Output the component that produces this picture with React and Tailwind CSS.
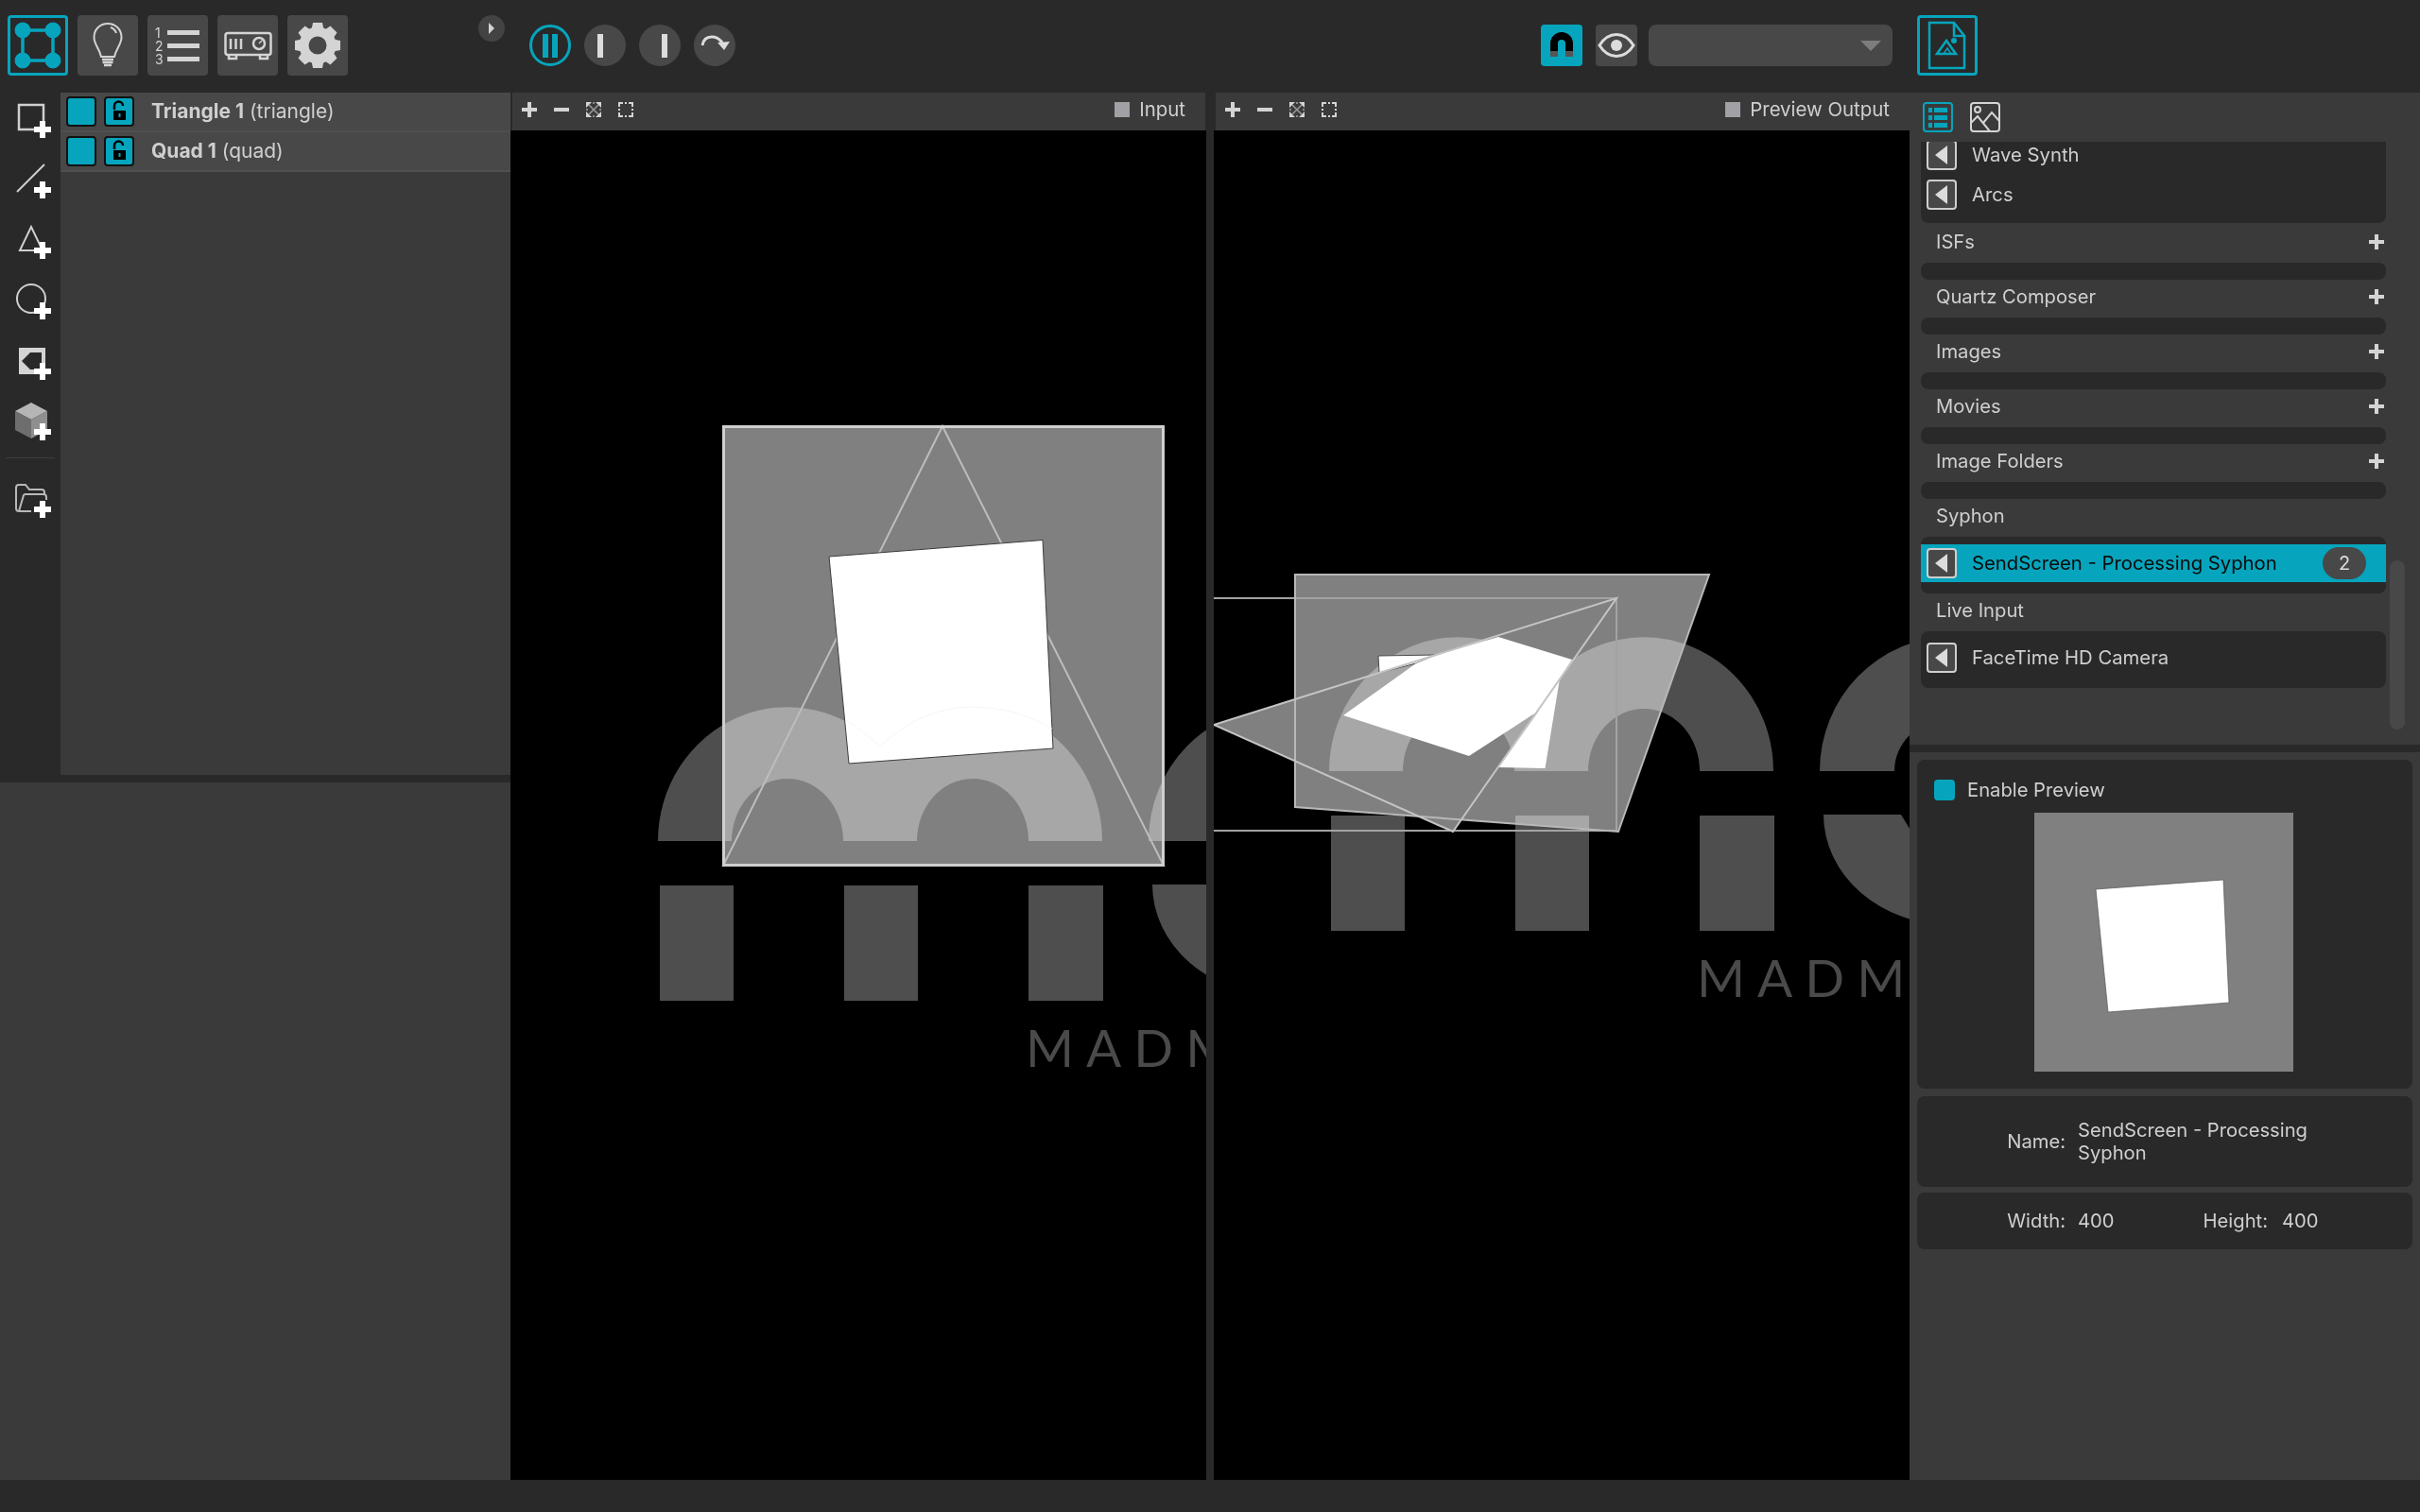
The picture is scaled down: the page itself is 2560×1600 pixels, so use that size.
import React from 'react';

const FONT = 'font-["Inter","Liberation_Sans",sans-serif]';

function Plus({ size = 16 }) {
  return (
    <svg width={size} height={size} viewBox="0 0 16 16" className="shrink-0">
      <path d="M6 0h4v6h6v4h-6v6H6v-6H0V6h6z" fill="#d4d4d4" />
    </svg>
  );
}

function Minus() {
  return (
    <svg width="16" height="16" viewBox="0 0 16 16" className="shrink-0">
      <rect x="0" y="6" width="16" height="4" fill="#d4d4d4" />
    </svg>
  );
}

function FitIcon() {
  return (
    <svg width="16" height="16" viewBox="0 0 16 16" className="shrink-0" fill="#d4d4d4">
      <path d="M0 0h6L0 6zM10 0h6v6zM0 10l6 6H0zM16 10v6h-6z" />
      <path d="M3 3L13 13M13 3L3 13" stroke="#9a9a9a" strokeWidth="1.500" />
      <path d="M7 0h2v2H7zM7 14h2v2H7zM0 7h2v2H0zM14 7h2v2h-2z" fill="#8a8a8a" />
    </svg>
  );
}

function SelectIcon() {
  return (
    <svg width="16" height="16" viewBox="0 0 16 16" className="shrink-0" fill="none" stroke="#d4d4d4" strokeWidth="2">
      <path d="M1 5V1h4M11 1h4v4M15 11v4h-4M5 15H1v-4" />
      <path d="M7 1h2M7 15h2M1 7v2M15 7v2" />
    </svg>
  );
}

function ViewHeader({ label, className }) {
  return (
    <div className={`h-10 bg-[#3a3a3a] flex items-center pb-1 ${className}`}>
      <div className="flex items-center gap-[18px] pl-[10px]">
        <Plus />
        <Minus />
        <FitIcon />
        <SelectIcon />
      </div>
      <div className="ml-auto flex items-center gap-[10px] pr-[21px]">
        <div className="w-4 h-4 bg-[#a0a0a5]" />
        <span className="text-[20.4px] leading-none text-[#cfcfcf]">{label}</span>
      </div>
    </div>
  );
}

function ToolPlus() {
  return <path d="M42 18h6v6h6v6h-6v6h-6v-6h-6v-6h6z" fill="#fff" />;
}

function ToolIcon({ children, className = 'h-16' }) {
  return (
    <div className={className}>
      <svg width="64" height="64" viewBox="0 0 64 64" className="overflow-visible" fill="none">
        {children}
        <ToolPlus />
      </svg>
    </div>
  );
}

function Toolbar() {
  return (
    <div className="w-16 bg-[#292929] pt-3 flex flex-col shrink-0">
      <ToolIcon>
        <rect x="20" y="1" width="26" height="26" stroke="#cfcfcf" strokeWidth="2.500" />
      </ToolIcon>
      <ToolIcon>
        <path d="M18 29L47 0" stroke="#cfcfcf" strokeWidth="2" />
      </ToolIcon>
      <ToolIcon>
        <path d="M33 2L21 27h24z" stroke="#cfcfcf" strokeWidth="2" />
      </ToolIcon>
      <ToolIcon>
        <circle cx="33" cy="14" r="15" stroke="#cfcfcf" strokeWidth="2" />
      </ToolIcon>
      <ToolIcon>
        <path d="M20 2h28v28H20z M32 7L23 16l9 9h12V7z" fill="#d4d4d4" fillRule="evenodd" />
      </ToolIcon>
      <ToolIcon className="h-[54px]">
        <path d="M33 -4L50 5 33 14 16 5z" fill="#b5b5b5" />
        <path d="M16 5L33 14V34L16 25z" fill="#6e6e6e" />
        <path d="M50 5L33 14V34L50 25z" fill="#8f8f8f" />
      </ToolIcon>
      <div className="h-[1px] mx-[6px] bg-[#3d3d3d] mb-[27px]" />
      <ToolIcon>
        <path d="M33 29H20a3 3 0 0 1-3-3V4a3 3 0 0 1 3-3h7l4 5h13a3 3 0 0 1 3 3v3" stroke="#b8b8b8" strokeWidth="2" />
        <path d="M20 29l5-17a2 2 0 0 1 2-1h19a3 3 0 0 1 3 3v3" stroke="#b8b8b8" strokeWidth="2" />
      </ToolIcon>
    </div>
  );
}

function LayerRow({ name, kind }) {
  return (
    <div className="h-[42px] border-b-2 border-[#4f4f4f] bg-[#484848] flex items-center pl-[6px] pb-[1px]">
      <div className="w-8 h-8 rounded-[4px] bg-[#06a5bd] border-2 border-[#111]" />
      <div className="w-8 h-8 rounded-[4px] bg-[#06a5bd] border-2 border-[#111] ml-2 flex items-center justify-center">
        <svg width="28" height="28" viewBox="0 0 28 28">
          <path d="M9 12V8a4.500 4.500 0 0 1 9 0" fill="none" stroke="#000" strokeWidth="2.500" />
          <rect x="8" y="13" width="13" height="10" fill="#000" />
          <rect x="13.500" y="16" width="2" height="4" fill="#06a5bd" />
        </svg>
      </div>
      <span className="ml-[18px] text-[21px] leading-none text-[#cfcfcf]">
        <span className="font-bold">{name}</span> {kind}
      </span>
    </div>
  );
}

function TopButton({ children, active }) {
  const style = active ? 'border-[3px] border-[#06a5bd]' : 'bg-[#484848]';
  return <div className={`w-16 h-16 rounded-[4px] flex items-center justify-center shrink-0 ${style}`}>{children}</div>;
}

function Gear() {
  const teeth = [0, 45, 90, 135, 180, 225, 270, 315];
  return (
    <svg width="64" height="64" viewBox="0 0 64 64">
      {teeth.map((a) => (
        <path key={a} d="M27 8h10l2 10H25z" fill="#d4d4d4" transform={`rotate(${a} 32 32)`} />
      ))}
      <circle cx="32" cy="32" r="14.500" fill="none" stroke="#d4d4d4" strokeWidth="10" />
    </svg>
  );
}

function TopBar() {
  return (
    <div className="h-[98px] flex items-start shrink-0 relative">
      <div className="flex gap-[10px] pl-2 pt-4">
        <TopButton active>
          <svg width="58" height="58" viewBox="0 0 58 58" fill="#06a5bd" stroke="#06a5bd">
            <path d="M13 13H45V45H13z" fill="none" strokeWidth="3.500" />
            <circle cx="13" cy="13" r="8" />
            <circle cx="45" cy="13" r="8" />
            <circle cx="13" cy="45" r="8" />
            <circle cx="45" cy="45" r="8" />
          </svg>
        </TopButton>
        <TopButton>
          <svg width="64" height="64" viewBox="0 0 64 64" fill="none" stroke="#d4d4d4" strokeWidth="2">
            <path d="M25 44C23 35 17.500 31 17.500 23.500 17.500 15 24 9 32 9s14.500 6 14.500 14.500C46.500 31 41 35 39 44z" />
            <path d="M26 47h12M26.500 50h11M28 53h8" strokeWidth="2.500" />
            <path d="M35 13c3 1 5 3 6 6" />
          </svg>
        </TopButton>
        <TopButton>
          <svg width="64" height="64" viewBox="0 0 64 64">
            <rect x="21" y="16" width="34" height="5" fill="#d4d4d4" />
            <rect x="21" y="30" width="34" height="5" fill="#d4d4d4" />
            <rect x="21" y="44" width="34" height="5" fill="#d4d4d4" />
            <text x="8" y="24" fontSize="14" fill="#d4d4d4">1</text>
            <text x="8" y="38" fontSize="14" fill="#d4d4d4">2</text>
            <text x="8" y="52" fontSize="14" fill="#d4d4d4">3</text>
          </svg>
        </TopButton>
        <TopButton>
          <svg width="64" height="64" viewBox="0 0 64 64" fill="none" stroke="#d4d4d4" strokeWidth="2.500">
            <rect x="8.500" y="19" width="48" height="23" rx="2.500" />
            <path d="M12 42v4h8v-4M45 42v4h8v-4" />
            <path d="M14 25v11M19.500 25v11M25 25v11" />
            <circle cx="44" cy="30" r="6" />
            <path d="M44 30l3-3" strokeWidth="1.500" />
          </svg>
        </TopButton>
        <TopButton>
          <Gear />
        </TopButton>
      </div>
      <div className="absolute left-[506px] top-4 w-7 h-7 rounded-full bg-[#434343] flex items-center justify-center">
        <svg width="8" height="14" viewBox="0 0 8 14">
          <path d="M1 1l6 6-6 6z" fill="#d4d4d4" />
        </svg>
      </div>
      <div className="flex gap-[14px] ml-[192px] pt-[26px]">
        <div className="w-11 h-11 rounded-full border-[3px] border-[#06a5bd] flex items-center justify-center gap-1">
          <div className="w-[6px] h-[25px] bg-[#06a5bd]" />
          <div className="w-[6px] h-[25px] bg-[#06a5bd]" />
        </div>
        <div className="w-11 h-11 rounded-full bg-[#484848] flex items-center pl-[14px]">
          <div className="w-[6px] h-[25px] bg-[#dcdcdc]" />
        </div>
        <div className="w-11 h-11 rounded-full bg-[#484848] flex items-center pl-6">
          <div className="w-[6px] h-[25px] bg-[#dcdcdc]" />
        </div>
        <div className="w-11 h-11 rounded-full bg-[#484848]">
          <svg width="44" height="44" viewBox="0 0 44 44">
            <path d="M9 22c1-6 5-9 10-9 5 0 8 2 11 6" fill="none" stroke="#dcdcdc" strokeWidth="3" />
            <path d="M25 19l13-1-6 9z" fill="#dcdcdc" />
          </svg>
        </div>
      </div>
      <div className="flex ml-[852px] pt-[26px]">
        <div className="w-11 h-11 rounded-[4px] bg-[#06a5bd]">
          <svg width="44" height="44" viewBox="0 0 44 44" fill="none">
            <path d="M14 28V20a8 8 0 0 1 16 0v8" stroke="#000" strokeWidth="8" />
            <path d="M14 28v6M30 28v6" stroke="#555" strokeWidth="8" />
          </svg>
        </div>
        <div className="w-11 h-11 rounded-[4px] bg-[#484848] ml-[14px]">
          <svg width="44" height="44" viewBox="0 0 44 44" fill="none">
            <path d="M4 22C9 14 15 10.500 22 10.500S35 14 40 22C35 30 29 33.500 22 33.500S9 30 4 22z" stroke="#dcdcdc" strokeWidth="3" />
            <circle cx="22" cy="22" r="6" fill="#dcdcdc" />
          </svg>
        </div>
        <div className="w-[258px] h-11 rounded-lg bg-[#484848] ml-3 flex items-center justify-end pr-3">
          <svg width="22" height="11" viewBox="0 0 22 11">
            <path d="M0 0h22L11 11z" fill="#7d7d7d" />
          </svg>
        </div>
      </div>
      <div className="ml-[26px] pt-4">
        <TopButton active>
          <svg width="58" height="58" viewBox="0 0 58 58" fill="none" stroke="#06a5bd" strokeWidth="2.500">
            <path d="M10 5H36L47 19V53H10z" />
            <path d="M36 5V19H47" />
            <path d="M18 38L28 24L38 38z" />
            <path d="M25 38l4-6 4 6" strokeWidth="1.500" />
            <circle cx="36" cy="24" r="3" fill="#06a5bd" stroke="none" />
          </svg>
        </TopButton>
      </div>
    </div>
  );
}

function Logo({ transform }) {
  return (
    <g transform={transform} fill="#4e4e4e">
      <path d="M696 890A137 142 0 0 1 931 791A137 142 0 0 1 1166 890H1088A59 66 0 0 0 970 890H892A59 66 0 0 0 774 890Z" />
      <rect x="698" y="937" width="78" height="122" />
      <rect x="893" y="937" width="78" height="122" />
      <rect x="1088" y="937" width="79" height="122" />
      <path d="M1215 890A139 142 0 0 1 1493 890H1414A60 56 0 0 0 1294 890Z" />
      <path d="M1219 936A135 117 0 0 0 1354 1053L1400 1050 1340 1000 1301 936Z" />
      <text x="1085" y="1129" fontSize="55" letterSpacing="13" fontFamily='"Lato","Liberation Sans",sans-serif' fill="#4a4a4a">
        MADMAPPER
      </text>
    </g>
  );
}

function InputCanvas() {
  return (
    <svg viewBox="540 138 736 1428" className="w-full flex-1 bg-black block" fill="none">
      <Logo />
      <rect x="765" y="451" width="466" height="465" fill="#808080" className="mix-blend-screen" />
      <path d="M997 451L765 916H1231Z" stroke="#bdbdbd" strokeWidth="2" />
      <rect x="765.500" y="451.500" width="465" height="464" stroke="#cfcfcf" strokeWidth="3" />
      <path d="M877 589L1103 571.500L1114 792L898 808Z" fill="#fff" stroke="#3d3d3d" strokeWidth="1" />
      <path d="M895 762Q915 775 931 790Q975 748 1029 748Q1075 748 1113 771" stroke="#f6f6f6" strokeWidth="1" />
    </svg>
  );
}

function OutputCanvas() {
  return (
    <svg viewBox="1284 138 736 1428" className="w-full flex-1 bg-black block" fill="none">
      <Logo transform="translate(710 -74)" />
      <g fill="#808080" className="mix-blend-screen">
        <path d="M1370 608H1808L1712 880L1370 854Z" />
        <path d="M1284 767L1710 633L1537 880Z" />
      </g>
      <path d="M1458 694L1520 693L1498 702L1459 712Z" fill="#fff" stroke="#4a4a4a" strokeWidth="1" />
      <path d="M1585 674L1663 698L1650 718L1634.500 813L1585 812L1628 752L1554 800L1421 757L1498 702L1520 693Z" fill="#fff" />
      <path d="M1284 633H1710V879H1284" stroke="#a3a3a3" strokeWidth="2" />
      <path d="M1370 608H1808L1712 880L1370 854Z" stroke="#b8b8b8" strokeWidth="2" />
      <path d="M1284 767L1710 633L1537 880Z" stroke="#c4c4c4" strokeWidth="2" />
    </svg>
  );
}

function BackButton() {
  return (
    <div className="w-8 h-8 rounded-[4px] border-2 border-[#cfcfcf] bg-[#484848] flex items-center justify-center shrink-0">
      <svg width="14" height="20" viewBox="0 0 14 20">
        <path d="M13 0v20L0 10z" fill="#dcdcdc" />
      </svg>
    </div>
  );
}

function SourceRow({ name, className = '' }) {
  return (
    <div className={`flex items-center pl-[6px] gap-4 ${className}`}>
      <BackButton />
      <span className="text-[20.3px] leading-none text-[#cfcfcf]">{name}</span>
    </div>
  );
}

function SectionHead({ title, add }) {
  return (
    <div className="h-10 flex items-center pl-4 pr-[2px] pb-1 text-[20.2px] text-[#cfcfcf]">
      <span className="leading-none">{title}</span>
      {add && (
        <span className="ml-auto">
          <Plus />
        </span>
      )}
    </div>
  );
}

function EmptyGroup() {
  return <div className="h-[18px] rounded-lg bg-[#292929]" />;
}

function SourceList() {
  return (
    <div className="h-[638px] relative overflow-hidden">
      <div className="w-[492px] ml-3">
        <div className="h-[88px] rounded-b-lg bg-[#292929] -mt-[2px] mb-[2px] flex flex-col gap-[10px]">
          <SourceRow name="Wave Synth" />
          <SourceRow name="Arcs" />
        </div>
        <SectionHead title="ISFs" add />
        <EmptyGroup />
        <SectionHead title="Quartz Composer" add />
        <EmptyGroup />
        <SectionHead title="Images" add />
        <EmptyGroup />
        <SectionHead title="Movies" add />
        <EmptyGroup />
        <SectionHead title="Image Folders" add />
        <EmptyGroup />
        <SectionHead title="Syphon" />
        <div className="h-[60px] rounded-lg bg-[#292929] pt-2">
          <div className="h-10 bg-[#06a5bd] flex items-center pl-[6px]">
            <BackButton />
            <span className="ml-4 text-[20.3px] leading-none text-[#0b0b0b]">SendScreen - Processing Syphon</span>
            <div className="ml-auto mr-[21px] w-[46px] h-[34px] rounded-full bg-[#484848] flex items-center justify-center text-[20px] text-[#dcdcdc]">
              2
            </div>
          </div>
        </div>
        <SectionHead title="Live Input" />
        <div className="h-[60px] rounded-lg bg-[#292929] pt-3">
          <SourceRow name="FaceTime HD Camera" />
        </div>
      </div>
      <div className="absolute left-[508px] top-[443px] w-4 h-[179px] rounded-full bg-[#484848]" />
    </div>
  );
}

function RightPanel() {
  return (
    <div className="w-[540px] bg-[#3a3a3a] flex flex-col shrink-0">
      <div className="h-[52px] flex gap-[18px] pl-[14px] pt-[10px]">
        <div className="w-8 h-8 rounded-[4px] border-2 border-[#06a5bd] flex flex-col justify-center gap-[3px] px-[4px]">
          <div className="h-[5px] flex gap-[2px]"><div className="w-1 bg-[#06a5bd]" /><div className="flex-1 bg-[#06a5bd]" /></div>
          <div className="h-[5px] flex gap-[2px]"><div className="w-1 bg-[#06a5bd]" /><div className="flex-1 bg-[#06a5bd]" /></div>
          <div className="h-[5px] flex gap-[2px]"><div className="w-1 bg-[#06a5bd]" /><div className="flex-1 bg-[#06a5bd]" /></div>
        </div>
        <svg width="32" height="32" viewBox="0 0 32 32" fill="none" stroke="#d4d4d4" strokeWidth="2">
          <rect x="1" y="1" width="30" height="30" rx="3" />
          <circle cx="8" cy="8" r="3" />
          <path d="M1 22L8 15L21 31M14 22L23 11L31 20" />
        </svg>
      </div>
      <SourceList />
      <div className="h-2 bg-[#292929] shrink-0" />
      <div className="px-2 pt-2 flex flex-col text-[20.2px] leading-6 text-[#cfcfcf]">
        <div className="h-[348px] rounded-lg bg-[#292929]">
          <div className="flex items-center pl-[18px] pt-5 gap-[13px]">
            <div className="w-[22px] h-[22px] rounded-[4px] bg-[#06a5bd]" />
            <span>Enable Preview</span>
          </div>
          <div className="ml-[124px] mt-[12px] w-[274px] h-[274px] bg-[#808080]">
            <svg width="274" height="274" viewBox="0 0 274 274">
              <path d="M65 81L200 71L206 201L78 211Z" fill="#fff" stroke="#555" strokeWidth="0.700" />
            </svg>
          </div>
        </div>
        <div className="h-24 rounded-lg bg-[#292929] mt-2 flex items-center">
          <span className="w-[157px] text-right">Name:</span>
          <span className="w-[280px] ml-[13px]">SendScreen - Processing Syphon</span>
        </div>
        <div className="h-[60px] rounded-lg bg-[#292929] mt-[6px] flex items-center">
          <span className="w-[157px] text-right">Width:</span>
          <span className="w-[132px] ml-[13px]">400</span>
          <span className="w-[69px] text-right">Height:</span>
          <span className="ml-[15px]">400</span>
        </div>
      </div>
    </div>
  );
}

export default function App() {
  return (
    <div className={`w-[2560px] h-[1600px] flex flex-col bg-[#292929] overflow-hidden ${FONT}`}>
      <TopBar />
      <div className="h-[1468px] flex">
        <div className="w-[540px] flex flex-col shrink-0">
          <div className="h-[722px] flex">
            <Toolbar />
            <div className="flex-1 bg-[#3a3a3a]">
              <LayerRow name="Triangle 1" kind="(triangle)" />
              <LayerRow name="Quad 1" kind="(quad)" />
            </div>
          </div>
          <div className="h-2 bg-[#292929]" />
          <div className="flex-1 bg-[#3a3a3a]" />
        </div>
        <div className="w-[736px] flex flex-col shrink-0">
          <ViewHeader label="Input" className="ml-[2px] mr-[1px]" />
          <InputCanvas />
        </div>
        <div className="w-2 shrink-0" />
        <div className="w-[736px] flex flex-col shrink-0">
          <ViewHeader label="Preview Output" className="ml-[2px]" />
          <OutputCanvas />
        </div>
        <RightPanel />
      </div>
      <div className="h-[34px] bg-[#292929] shrink-0" />
    </div>
  );
}
